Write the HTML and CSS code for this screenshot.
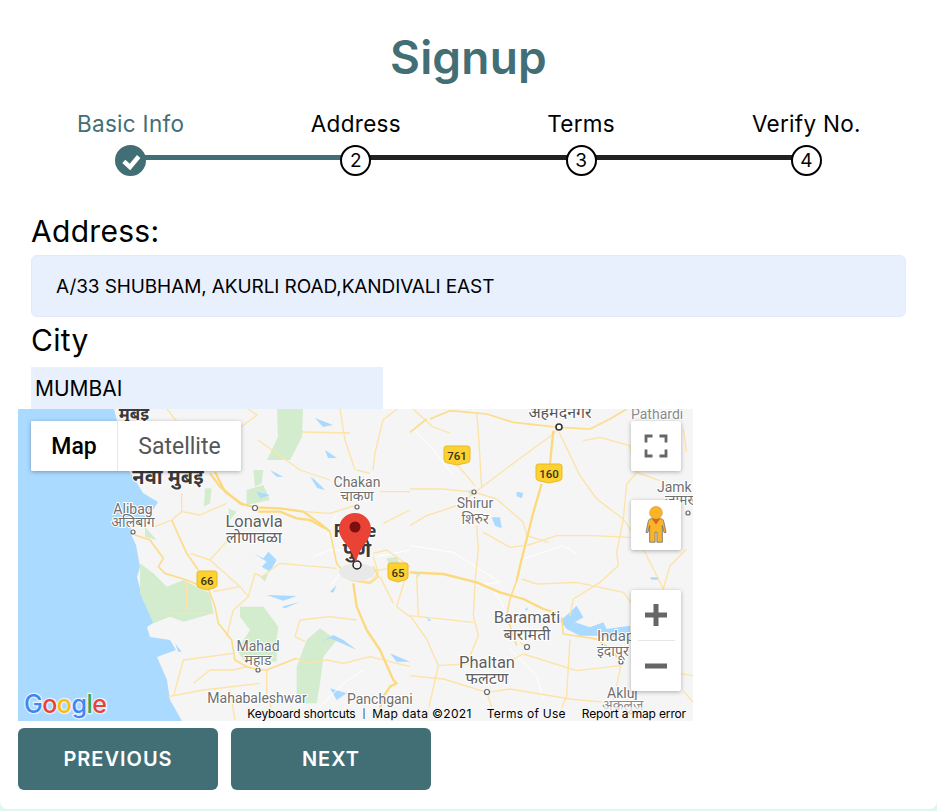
FILE: index.html
```html
<!DOCTYPE html>
<html lang="en">
<head>
<meta charset="utf-8">
<title>Signup</title>
<link rel="stylesheet" href="styles.css">
</head>
<body>
<main class="card">
  <h1 class="title">Signup</h1>
  <ol class="steps">
    <li class="step step-done"><span class="step-label">Basic Info</span><span class="step-dot"><svg class="check" viewBox="0 0 20 20"><path d="M2.800 10.300l6.200 5.700 8.700-10.500" /></svg></span></li>
    <li class="step"><span class="step-label">Address</span><span class="step-dot">2</span></li>
    <li class="step"><span class="step-label">Terms</span><span class="step-dot">3</span></li>
    <li class="step"><span class="step-label">Verify No.</span><span class="step-dot">4</span></li>
  </ol>
  <form class="form">
    <label class="label">Address:</label>
    <div class="field field-address">A/33 SHUBHAM, AKURLI ROAD,KANDIVALI EAST</div>
    <label class="label label-city">City</label>
    <div class="field field-city">MUMBAI</div>
  </form>
  <section class="map">
    <svg class="map-art" viewBox="18 409 675 312" width="675" height="312">
      <rect x="18" y="409" width="675" height="312" fill="#f5f5f5"/>
      <path fill="#aadaff" d="M18 409H114L118 425L128 470L132 475L143 493L158 502L150 515L133 522L130 532L136 545L140 567L137 577L143 600L158 620L147 627L150 637L170 640L176 650L157 657L167 680L170 700L182 721H18Z"/>

      <g>
        <path class="forest" d="M277 409L303 409L302 437L290 460L267 460L278 437Z"/>
        <path class="lake" d="M315 418L333 425L323 427Z"/>
        <path class="lake" d="M312 477L325 490L317 488Z"/>
        <path class="lake" d="M325 450L337 458L328 458Z"/>
        <g class="road-thin-page">
          <path d="M167 409L177 422L207 467M233 433L257 415L248 409M302 432L350 433M383 420L397 409M383 420L375 453L373 470"/>
          <path d="M413 409L433 427L450 433M258 440L300 470L330 480M340 409L345 440L355 470"/>
        </g>
      </g>

      <g transform="translate(130 470) scale(.33333)">
        <g class="forest">
          <path d="M30 280L70 310L110 350L160 330L240 370L250 430L160 455L120 440L70 460L30 370Z"/>
          <path d="M330 410L400 410L445 470L440 510L440 575L340 570L320 540L360 480L330 440Z"/>
          <path d="M570 475L620 510L580 560L570 640L560 700L500 700L500 590L530 510Z"/>
          <path d="M350 60L400 45L420 90L350 105Z"/>
          <path d="M225 55L245 55L240 100L222 110Z"/>
          <path d="M295 115L320 125L300 150Z"/>
          <path d="M770 265L800 260L810 285L780 295Z"/>
          <path d="M390 320L415 310L405 335Z"/>
          <path d="M45 170L80 210L45 200Z"/>
          <path d="M370 0L400 0L395 40L375 50Z"/>
        </g>
        <g class="lake">
          <path d="M410 375L500 378L460 392Z"/>
          <path d="M455 410L510 395L465 415Z"/>
          <path d="M370 250L400 265L415 245L440 270L420 305L395 290L410 275Z"/>
          <path d="M575 515L610 495L640 510L680 540L640 522L600 505Z"/>
          <path d="M600 655L650 670L620 690Z"/>
          <path d="M780 550L840 575L800 575Z"/>
          <path d="M600 365L620 345L610 368Z"/>
          <path d="M135 520L155 545L145 545Z"/>
          <path d="M540 20L580 55L560 50Z"/>
          <path d="M420 0L460 20L440 20Z"/>
          <path d="M380 65L420 75L390 85Z"/>
        </g>
        <g class="road-white">
          <path d="M550 260L600 240L660 240M620 130L590 200M740 260L840 240M600 350L640 300M560 720L640 640L700 600"/>
        </g>
        <g class="road-thin">
          <path d="M155 70L155 125L125 150L75 170M155 125L210 135L290 100"/>
          <path d="M410 600V680M240 270L290 215M240 270L330 350L355 380L375 310L395 320L450 280L620 295"/>
          <path d="M250 365L330 350M355 380L310 420L290 500M525 515L495 500L510 450L600 440L680 450"/>
          <path d="M130 680L160 570L310 550M190 640L240 600L310 600L350 590M115 680L220 660L390 640"/>
          <path d="M680 300L750 300L780 295M660 330L720 335L745 310L730 260M680 105L600 130L520 125"/>
          <path d="M750 65H840M830 310L800 410L840 440M750 320L790 400M730 250L770 240L840 290M840 120L760 160"/>
          <path d="M680 0L720 10M700 40V20M500 565L530 580L590 570L640 580L720 560L840 590"/>
          <path d="M180 250L240 270M170 330V420M120 430L250 430M410 680L440 750M300 660L315 750"/>
        </g>
        <g class="road-mid">
          <path d="M125 150L170 250L205 300M15 195L60 210L100 265L85 290L105 310L170 330L205 345"/>
          <path d="M235 355L255 410L265 460L305 510L315 570L350 590L385 600L410 600L500 565"/>
          <path d="M600 185L620 280L660 330L680 300"/>
          <path d="M660 330L720 340L745 320L730 290"/>
        </g>
        <g class="road-thick">
          <path d="M240 10L270 50L330 100L375 112L450 115L520 125L570 160L600 185"/>
          <path d="M255 5L285 65L340 105M385 125L450 125L500 145L540 150L585 175"/>
          <path d="M670 340L680 410L710 480L750 540L790 630L800 640L780 650L760 680L740 750"/>
        </g>
      </g>

      <g transform="translate(410 409) scale(.33333)">
        <g class="forest">
          <path d="M10 490L35 490L25 505Z"/>
          <path d="M170 245L195 240L185 262Z"/>
        </g>
        <g class="lake">
          <path d="M480 610L500 590L520 625L495 640L540 655L580 640L590 660L660 650L660 690L560 680L510 680L470 660L450 635Z"/>
          <path d="M320 248L340 252L335 268L320 262Z"/>
          <path d="M245 325L270 325L275 358L255 350Z"/>
          <path d="M720 505L745 505L745 512L725 512Z"/>
          <path d="M50 625L65 635L55 635Z"/>
          <path d="M345 600L355 595L350 605Z"/>
        </g>
        <g class="road-white">
          <path d="M0 50L60 110L130 200M340 450L460 410L500 435M0 410L130 430L270 520L190 530M250 540L290 610M300 720L380 800L400 870"/>
        </g>
        <g class="road-thin">
          <path d="M447 55L430 75L300 170L215 235L195 250M0 240L100 240L195 250L260 270L340 340L350 380L415 400"/>
          <path d="M200 10L205 70L215 235M140 165L195 230M195 250L140 290L50 320L0 350"/>
          <path d="M200 350L205 420L195 520L190 620L205 680L180 740"/>
          <path d="M447 70L510 200L560 270L640 330L660 360L700 420L760 540L780 470L830 420"/>
          <path d="M650 225L640 330L620 430L625 470L570 520L490 570L480 620"/>
          <path d="M335 510L380 525L500 520L640 550L670 590M350 410L440 380L550 380L660 385M220 370L300 415L340 410"/>
          <path d="M630 770L500 785L340 735L310 750L240 760L85 770L50 690L0 620"/>
          <path d="M330 700L350 715M0 800L100 810L230 850L300 840L480 870L590 880M632 770L610 880"/>
          <path d="M480 690L470 860L440 936M85 770L60 880L50 936M20 500L25 620M230 850L260 936"/>
          <path d="M520 95L570 85L660 110L680 190L650 225M680 190L750 215M820 60L830 130M790 790L849 800M820 845L849 880M0 620L190 640"/>
        </g>
        <g class="road-mid">
          <path d="M60 30L120 5L230 15L310 40M50 30L0 70"/>
          <path d="M455 625L460 675L560 690L600 720L635 760"/>
          <path d="M310 40L400 50L447 55L540 60L600 30L650 0"/>
          <path d="M320 515L300 570L290 620L320 710"/>
        </g>
        <g class="road-thick">
          <path d="M0 490L100 495L200 520L270 550L340 570L400 600L450 615"/>
          <path d="M395 225L370 310L350 390L335 450L320 515M430 65L420 165"/>
        </g>
      </g>

      <ellipse cx="357" cy="572" rx="18" ry="9" fill="#e9e9e9"/>
      <g class="map-dots">
        <circle cx="255" cy="508" r="2.500"/><circle cx="133" cy="532" r="2"/><circle cx="258" cy="670" r="2"/><circle cx="357" cy="507" r="2"/><circle cx="474" cy="492" r="2"/><circle cx="527" cy="647" r="2.500"/><circle cx="487" cy="692" r="2.500"/><circle cx="621" cy="662" r="2"/><circle cx="688" cy="513" r="2"/>
      </g>
      <circle cx="559" cy="427" r="3" fill="#fff" stroke="#333" stroke-width="1.600"/>
      <g class="map-town">
        <text x="133" y="514" text-anchor="middle">Alibag</text>
        <text x="133" y="527" text-anchor="middle" class="small">अलिबाग</text>
        <text x="357" y="487" text-anchor="middle">Chakan</text>
        <text x="357" y="501" text-anchor="middle" class="small">चाकण</text>
        <text x="475" y="508" text-anchor="middle">Shirur</text>
        <text x="475" y="524" text-anchor="middle" class="small">शिरुर</text>
        <text x="631" y="419" class="faint">Pathardi</text>
        <text x="657" y="492">Jamk</text>
        <text x="665" y="505" class="small">जामखेड</text>
        <text x="597" y="641" class="wide">Indap</text>
        <text x="597" y="656" class="small">इंदापूर</text>
        <text x="607" y="698">Akluj</text>
        <text x="602" y="710" class="small faint">अकलूज</text>
        <text x="258" y="651" text-anchor="middle">Mahad</text>
        <text x="258" y="665" text-anchor="middle" class="small">महाड</text>
        <text x="257" y="703" text-anchor="middle">Mahabaleshwar</text>
        <text x="347" y="704">Panchgani</text>
      </g>
      <g class="map-city">
        <text x="254" y="527" text-anchor="middle">Lonavla</text>
        <text x="254" y="543" text-anchor="middle" class="small">लोणावळा</text>
        <text x="527" y="623" text-anchor="middle">Baramati</text>
        <text x="527" y="640" text-anchor="middle" class="small">बारामती</text>
        <text x="487" y="668" text-anchor="middle">Phaltan</text>
        <text x="487" y="684" text-anchor="middle" class="small">फलटण</text>
      </g>
      <g class="map-metro">
        <text x="134" y="420" text-anchor="middle">मुंबई</text>
        <text x="168" y="484" text-anchor="middle" class="metro-wide">नवी मुंबई</text>
        <text x="355" y="537" text-anchor="middle">Pune</text>
        <text x="357" y="557" text-anchor="middle" class="metro-wide">पुणे</text>
      </g>
      <text class="map-metro-thin" x="560" y="418" text-anchor="middle">अहमदनगर</text>
      <g class="shield">
        <path transform="translate(444 446)" d="M2.500 0h21a2.500 2.500 0 0 1 2.500 2.500v11q0 2.500-2.500 3.200L13 19 2.500 16.700Q0 16 0 13.500v-11A2.500 2.500 0 0 1 2.500 0z"/>
        <text x="457" y="460" text-anchor="middle">761</text>
        <path transform="translate(536 464)" d="M2.500 0h21a2.500 2.500 0 0 1 2.500 2.500v11q0 2.500-2.500 3.200L13 19 2.500 16.700Q0 16 0 13.500v-11A2.500 2.500 0 0 1 2.500 0z"/>
        <text x="549" y="478" text-anchor="middle">160</text>
        <path transform="translate(388 563)" d="M2.500 0h15a2.500 2.500 0 0 1 2.500 2.500v11q0 2.500-2.500 3.200L10 19 2.500 16.700Q0 16 0 13.500v-11A2.500 2.500 0 0 1 2.500 0z"/>
        <text x="398" y="577" text-anchor="middle">65</text>
        <path transform="translate(197 571)" d="M2.500 0h15a2.500 2.500 0 0 1 2.500 2.500v11q0 2.500-2.500 3.200L10 19 2.500 16.700Q0 16 0 13.500v-11A2.500 2.500 0 0 1 2.500 0z"/>
        <text x="207" y="585" text-anchor="middle">66</text>
      </g>
      <circle cx="357" cy="565" r="4" fill="#fff" fill-opacity=".4" stroke="#222" stroke-width="1.500"/>
      <path d="M355 513c-9 0-16 7-16 16 0 12 12 16 17 34 4-18 15-22 15-34 0-9-7-16-16-16z" fill="#ea4335"/>
      <circle cx="355" cy="527" r="5.500" fill="#7d0f10"/>
      <text class="google" x="24" y="713"><tspan fill="#4285f4">G</tspan><tspan fill="#ea4335">o</tspan><tspan fill="#fbbc05">o</tspan><tspan fill="#4285f4">g</tspan><tspan fill="#34a853">l</tspan><tspan fill="#ea4335">e</tspan></text>
    </svg>
    <div class="map-type">
      <button type="button" class="map-type-btn map-type-active">Map</button>
      <button type="button" class="map-type-btn">Satellite</button>
    </div>
    <div class="ctrl ctrl-full">
      <svg viewBox="0 0 24 24" width="24" height="24"><path d="M2 8.500V2h6.500M15.500 2H22v6.500M22 15.500V22h-6.500M8.500 22H2v-6.500" fill="none" stroke="#666" stroke-width="2.800"/></svg>
    </div>
    <div class="ctrl ctrl-peg">
      <svg viewBox="0 0 24 42" width="22" height="38"><path d="M7 14h10c2 0 3 1 3.500 3L23 29l-2 .5-2-8V40h-6V29h-2v11H5V21.500l-2 8-2-.5L3.500 17c.5-2 1.500-3 3.500-3z" fill="#fbb328" stroke="#777" stroke-width="1"/><circle cx="12" cy="7.500" r="7" fill="#fbb328" stroke="#c98a1a" stroke-width=".6"/><path d="M7.500 14.500h9l-4.500 6z" fill="#d9661f"/></svg>
    </div>
    <div class="ctrl ctrl-zoom">
      <div class="zoom-btn"><svg viewBox="0 0 24 24" width="24" height="24"><path d="M12 1v22M1 12h22" stroke="#666" stroke-width="5"/></svg></div>
      <div class="zoom-rule"></div>
      <div class="zoom-btn"><svg viewBox="0 0 24 24" width="24" height="24"><path d="M1 12h22" stroke="#666" stroke-width="5"/></svg></div>
    </div>
    <div class="attrib">
      <span class="attrib-keys">Keyboard shortcuts</span><span class="attrib-sep">|</span><span class="attrib-data">Map data ©2021</span><span class="attrib-terms">Terms of Use</span><span>Report a map error</span>
    </div>
  </section>
  <div class="actions">
    <button type="button" class="btn">PREVIOUS</button>
    <button type="button" class="btn">NEXT</button>
  </div>
</main>
</body>
</html>
```
FILE: styles.css
```css
* { box-sizing: border-box; }
html, body { margin: 0; padding: 0; }
body {
  height: 811px;
  overflow: hidden;
  background: #dff7f1;
  font-family: Inter, "Noto Sans", sans-serif;
  color: #000;
}
.card {
  height: 809px;
  padding: 27px 18px 0;
  background: #fff;
  border-radius: 0 0 8px 8px;
}
.title {
  margin: 0;
  font-size: 46px;
  line-height: 60px;
  font-weight: 600;
  letter-spacing: .2px;
  text-align: center;
  color: #426f75;
}
.steps {
  display: flex;
  list-style: none;
  margin: 21px 0 0;
  padding: 0;
}
.step {
  position: relative;
  flex: 1 1 0;
  display: flex;
  flex-direction: column;
  align-items: center;
  font-size: 22.500px;
  letter-spacing: .3px;
}
.step-label { line-height: 31px; }
.step-done .step-label { color: #426f75; }
.step:not(:last-child)::after {
  content: "";
  position: absolute;
  left: 50%;
  width: 100%;
  top: 47px;
  height: 5px;
  background: #222;
}
.step-done:not(:last-child)::after { background: #426f75; }
.step-dot {
  position: relative;
  z-index: 1;
  width: 31px;
  height: 31px;
  margin-top: 6px;
  display: flex;
  align-items: center;
  justify-content: center;
  border: 2px solid #000;
  border-radius: 50%;
  background: #fff;
  font-size: 19px;
  letter-spacing: 0;
}
.step-done .step-dot { background: #426f75; border-color: #426f75; }
.check { width: 20px; height: 20px; flex: none; fill: none; stroke: #fff; stroke-width: 4.500; }
.form { margin: 35px 13px 0; }
.label {
  display: block;
  font-size: 30px;
  line-height: 40px;
  letter-spacing: .3px;
}
.label-city { margin-top: 3px; height: 47px; }
.field {
  background: #e8f0fe;
  font-size: 19px;
}
.field-address {
  margin-top: 4px;
  height: 62px;
  line-height: 62px;
  padding-left: 24px;
  border: 1px solid #e2eafb;
  border-radius: 6px;
  letter-spacing: -.1px;
}
.field-city {
  width: 352px;
  height: 42px;
  line-height: 44px;
  padding-left: 4px;
  font-size: 21px;
}
.map {
  position: relative;
  width: 675px;
  height: 312px;
  overflow: hidden;
}
.map-art { display: block; }
.forest { fill: #d3ecce; }
.lake { fill: #aadaff; }
.road-white { fill: none; stroke: #fff; stroke-width: 3; }
.road-thin, .road-mid, .road-thick, .road-thin-page { fill: none; stroke-linejoin: round; }
.road-thin { stroke: #fde3a6; stroke-width: 4; }
.road-thin-page { stroke: #fde3a6; stroke-width: 1.300; }
.road-mid { stroke: #fddc8a; stroke-width: 5; }
.road-thick { stroke: #fdd97e; stroke-width: 7; }
.map-dots circle { fill: #fff; stroke: #666; stroke-width: 1.200; }
.map-town text { font: 14px Roboto, sans-serif; fill: #6f6f6f; paint-order: stroke; stroke: #fff; stroke-width: 2px; }
.map-town .wide { font-size: 15px; }
.map-town .faint { fill: #8a8a8a; }
.map-town .small, .map-city .small { font-family: "Noto Sans", Roboto, sans-serif; }
.map-town .small { font-size: 14px; }
.map-city text { font: 16.500px Roboto, sans-serif; fill: #5f5f5f; paint-order: stroke; stroke: #fff; stroke-width: 2px; }
.map-city .small { font-size: 16px; }
.map-metro text { font: 700 17px "Noto Sans", Roboto, sans-serif; fill: #3a3a3a; paint-order: stroke; stroke: #fff; stroke-width: 2px; }
.map-metro .metro-wide { font-size: 20px; }
.map-metro-thin { font: 16px "Noto Sans", Roboto, sans-serif; fill: #555; paint-order: stroke; stroke: #fff; stroke-width: 2px; }
.shield path { fill: #fdd12f; stroke: #e8b92a; stroke-width: 1; }
.shield text { font: 500 11.500px Roboto, sans-serif; fill: #3a3320; }
.google { font: 500 25px Inter, sans-serif; letter-spacing: -.5px; paint-order: stroke; stroke: #fff; stroke-opacity: .7; stroke-width: 2.500px; }
.map-type {
  position: absolute;
  left: 13px;
  top: 12px;
  display: flex;
  height: 50px;
  border-radius: 2px;
  overflow: hidden;
  background: #fff;
  box-shadow: 0 1px 4px rgba(0, 0, 0, .3);
}
.map-type-btn {
  border: 0;
  background: #fff;
  padding: 0;
  width: 123px;
  font: 23px Roboto, sans-serif;
  color: #565656;
}
.map-type-active {
  width: 87px;
  color: #000;
  font-weight: 500;
  border-right: 1px solid #e6e6e6;
}
.ctrl {
  position: absolute;
  left: 613px;
  width: 50px;
  background: #fff;
  border-radius: 2px;
  box-shadow: 0 1px 4px rgba(0, 0, 0, .3);
  display: flex;
  align-items: center;
  justify-content: center;
}
.ctrl-full { top: 12px; height: 50px; }
.ctrl-peg { top: 91px; height: 50px; }
.ctrl-zoom { top: 181px; height: 101px; flex-direction: column; justify-content: flex-start; }
.zoom-btn { height: 50px; width: 100%; display: flex; align-items: center; justify-content: center; }
.zoom-rule { width: 37px; height: 1px; background: #e6e6e6; }
.attrib {
  position: absolute;
  right: 0;
  bottom: 0;
  width: 444px;
  height: 14px;
  display: flex;
  justify-content: flex-end;
  align-items: center;
  padding-right: 7px;
  font-size: 12px;
  line-height: 14px;
  letter-spacing: -.15px;
  white-space: nowrap;
  background: rgba(245, 245, 245, .7);
}
.attrib-sep { margin: 0 7px; font-size: 9px; }
.attrib-data { letter-spacing: .35px; }
.attrib-terms { margin: 0 16px 0 15px; letter-spacing: .25px; }
.actions {
  display: flex;
  gap: 13px;
  margin-top: 7px;
}
.btn {
  width: 200px;
  height: 62px;
  border: 0;
  border-radius: 6px;
  background: #426f75;
  color: #fff;
  font: 600 20px Inter, sans-serif;
  letter-spacing: 1px;
}
```
